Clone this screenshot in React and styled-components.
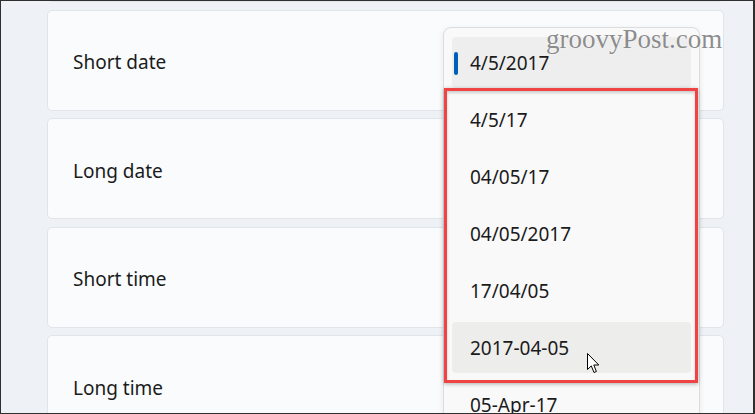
import React from "react";
import styled, { createGlobalStyle } from "styled-components";

const Global = createGlobalStyle`
  html, body { margin: 0; padding: 0; background: #eef2f6; }
  * { box-sizing: border-box; }
`;

const Frame = styled.div`
  position: relative;
  width: 755px;
  height: 414px;
  overflow: hidden;
  background: #eef2f6;
  border: 1px solid #2f2f2f;
  border-right-width: 2px;
  font-family: "Noto Sans", "Open Sans", sans-serif;
  color: #1b1b1b;
`;

const List = styled.div`
  display: flex;
  flex-direction: column;
  gap: 7.5px;
  margin-top: -100px;
  padding-left: 46px;
  padding-right: 29px;
`;

const Card = styled.div`
  height: 101px;
  display: flex;
  align-items: center;
  padding-left: 25px;
  padding-top: 4px;
  background: #f9fbfd;
  border: 1px solid #e1e5e9;
  border-radius: 5px;
  font-size: 19px;
`;

const Popup = styled.div`
  position: absolute;
  left: 442px;
  top: 26px;
  width: 257px;
  height: 420px;
  padding: 6px 8px;
  display: flex;
  flex-direction: column;
  background: #f9f9fa;
  border: 1px solid #dcdcdc;
  border-radius: 8px;
  box-shadow: 0 2px 6px rgba(0, 0, 0, 0.08);
`;

const Item = styled.div`
  position: relative;
  height: 51px;
  margin: 3px 0;
  flex: none;
  display: flex;
  align-items: center;
  padding-left: 18px;
  font-size: 19px;
  border-radius: 4px;
  background: ${(p) => (p.$active ? "#eeeeee" : p.$hover ? "#ededec" : "transparent")};
`;

const Pill = styled.span`
  position: absolute;
  left: 2px;
  top: 50%;
  width: 4px;
  height: 23px;
  margin-top: -11px;
  border-radius: 2px;
  background: #005fb8;
`;

const RedBox = styled.div`
  position: absolute;
  left: 443px;
  top: 87px;
  width: 254px;
  height: 295px;
  border: 3px solid #f04444;
  box-shadow: 0 1px 4px rgba(0, 0, 0, 0.3), inset 0 2px 3px rgba(0, 0, 0, 0.18);
`;

const Watermark = styled.div`
  position: absolute;
  left: 545px;
  top: 23px;
  font-family: "Liberation Serif", "Times New Roman", serif;
  font-size: 27px;
  color: rgba(120, 120, 120, 0.85);
  text-shadow: 0 0 2px rgba(255, 255, 255, 0.8);
  white-space: nowrap;
`;

const Cursor = styled.svg`
  position: absolute;
  left: 586px;
  top: 352px;
`;

const labels = ["", "Short date", "Long date", "Short time", "Long time"];
const options = ["4/5/17", "04/05/17", "04/05/2017", "17/04/05", "2017-04-05", "05-Apr-17"];

export default function App() {
  return (
    <>
      <Global />
      <Frame>
        <List>
          {labels.map((l, i) => (
            <Card key={i}>{l}</Card>
          ))}
        </List>
        <Popup>
          <Item $active>
            <Pill />
            4/5/2017
          </Item>
          {options.map((o) => (
            <Item key={o} $hover={o === "2017-04-05"}>
              {o}
            </Item>
          ))}
        </Popup>
        <RedBox />
        <Watermark>groovyPost.com</Watermark>
        <Cursor width="13" height="21" viewBox="0 0 13 21">
          <path
            d="M0.5 0.5 L0.5 16.5 L4.3 12.9 L7 19.5 L9.4 18.5 L6.8 12 L11.8 12 Z"
            fill="#fff"
            stroke="#000"
            strokeWidth="1"
            strokeLinejoin="round"
          />
        </Cursor>
      </Frame>
    </>
  );
}
